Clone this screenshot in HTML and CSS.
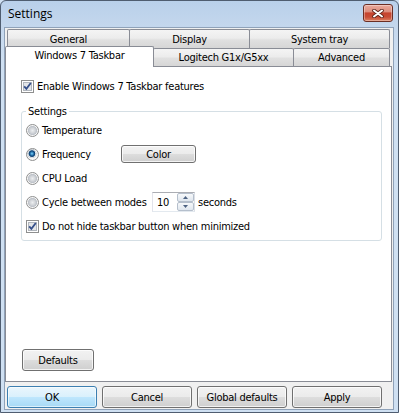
FILE: index.html
```html
<!DOCTYPE html>
<html>
<head>
<meta charset="utf-8">
<link rel="stylesheet" href="styles.css">
</head>
<body>
<div class="window">
  <div class="titlebar">
    <span class="title">Settings</span>
    <div class="close">
      <svg width="12" height="9" viewBox="0 0 12 9">
        <path d="M2 1.5 L10 7.5 M10 1.5 L2 7.5" stroke="#5a2218" stroke-width="3.6" stroke-linecap="round" fill="none"/>
        <path d="M2 1.5 L10 7.5 M10 1.5 L2 7.5" stroke="#ffffff" stroke-width="2" stroke-linecap="round" fill="none"/>
      </svg>
    </div>
  </div>
  <div class="client">
    <div class="tabs">
      <div class="tabrow row1">
        <div class="tab t-general">General</div>
        <div class="tab t-display">Display</div>
        <div class="tab t-tray">System tray</div>
      </div>
      <div class="tabrow row2">
        <div class="tab selected t-win7">Windows 7 Taskbar</div>
        <div class="tab t-logi">Logitech G1x/G5xx</div>
        <div class="tab t-adv">Advanced</div>
      </div>
    </div>
    <div class="panel">
      <div class="check-row enable">
        <span class="checkbox"><svg width="13" height="13" viewBox="0 0 13 13"><rect x="2.5" y="2.5" width="8" height="8" fill="#e3e5e8" stroke="#b1b6bd"/><path d="M3.2 6.3 L5.4 8.9 L9.8 3" stroke="#354f8a" stroke-width="1.8" fill="none"/></svg></span>
        <span class="cb-label">Enable Windows 7 Taskbar features</span>
      </div>
      <fieldset class="group">
        <legend>Settings</legend>
        <div class="opt"><span class="radio"></span><span class="lbl">Temperature</span></div>
        <div class="opt"><span class="radio on"></span><span class="lbl w-freq">Frequency</span><button class="btn color">Color</button></div>
        <div class="opt"><span class="radio"></span><span class="lbl">CPU Load</span></div>
        <div class="opt"><span class="radio"></span><span class="lbl w-cycle">Cycle between modes</span>
          <div class="spin">
            <span class="spin-val">10</span>
            <div class="spin-btns">
              <span class="arrow"><svg width="5" height="3" viewBox="0 0 5 3"><path d="M0 3 L2.5 0 L5 3 Z" fill="#4d6282"/></svg></span>
              <span class="arrow"><svg width="5" height="3" viewBox="0 0 5 3"><path d="M0 0 L2.5 3 L5 0 Z" fill="#4d6282"/></svg></span>
            </div>
          </div>
          <span class="after">seconds</span>
        </div>
        <div class="opt"><span class="checkbox"><svg width="13" height="13" viewBox="0 0 13 13"><rect x="2.5" y="2.5" width="8" height="8" fill="#e3e5e8" stroke="#b1b6bd"/><path d="M3.2 6.3 L5.4 8.9 L9.8 3" stroke="#354f8a" stroke-width="1.8" fill="none"/></svg></span><span class="cb-label">Do not hide taskbar button when minimized</span></div>
      </fieldset>
      <button class="btn defaults">Defaults</button>
    </div>
    <div class="buttons">
      <button class="btn default">OK</button>
      <button class="btn">Cancel</button>
      <button class="btn">Global defaults</button>
      <button class="btn">Apply</button>
    </div>
  </div>
</div>
</body>
</html>
```

FILE: styles.css
```css
* { box-sizing: border-box; }
html, body { margin: 0; padding: 0; }
body {
  width: 399px;
  height: 413px;
  overflow: hidden;
  background: #cfe0f2;
  font: 11px/13px "DejaVu Sans Condensed", "DejaVu Sans", sans-serif;
  font-stretch: condensed;
  letter-spacing: -0.25px;
  color: #000;
}

.window {
  width: 399px;
  height: 413px;
  display: flex;
  flex-direction: column;
  border: 1px solid #4f5d70;
  border-radius: 6px 6px 0 0;
  background: linear-gradient(#b9d0ea 0, #c4d7ed 26px, #cfe0f2 60px, #cfe0f2 100%);
}

.titlebar {
  height: 26px;
  flex: none;
  display: flex;
  align-items: flex-start;
  padding: 0 5px 0 7px;
}
.title {
  font: 12px/16px "Open Sans", sans-serif;
  letter-spacing: 0;
  margin-top: 5px;
  color: #000;
}
.close {
  margin-left: auto;
  margin-top: 3px;
  width: 30px;
  height: 18px;
  border: 1px solid #6b2e24;
  border-radius: 3px;
  background: linear-gradient(#eaaa9c 0%, #dc8d7d 42%, #c6432d 50%, #c84c36 75%, #dd8262 100%);
  box-shadow: inset 0 0 0 1px rgba(255,255,255,0.35);
  display: flex;
  align-items: center;
  justify-content: center;
}

.client {
  flex: 1;
  margin: 0 4px 2px 3px;
  background: #f0f0f0;
  border: 1px solid #8fa2b9;
  display: flex;
  flex-direction: column;
  padding: 1px 0 1px 0;
}

.tabs { flex: none; }
.tabrow { display: flex; }
.row1 { height: 19px; padding-left: 2px; align-items: flex-start; }
.row2 { height: 18px; align-items: flex-end; position: relative; z-index: 1; }

.tab {
  border: 1px solid #898c95;
  border-bottom: 0;
  border-radius: 2px 2px 0 0;
  background: linear-gradient(#f4f4f4 0%, #ececec 45%, #e0e0e0 55%, #d6d6d6 100%);
  display: flex;
  align-items: center;
  justify-content: center;
  flex: none;
  white-space: nowrap;
}
.tab + .tab { margin-left: -1px; }
.row1 .tab { height: 19px; }
.row2 .tab { height: 18px; }
.t-general { width: 123px; }
.t-display { width: 121px; }
.t-tray { width: 141px; }
.t-win7 { width: 149px; }
.t-logi { width: 141px; }
.t-adv { width: 97px; }
.row2 .tab.selected {
  height: 21px;
  margin-bottom: -1px;
  background: #fff;
  padding-bottom: 3px;
  position: relative;
  z-index: 2;
}

.panel {
  flex: 1;
  background: #fff;
  border: 1px solid #898c95;
  margin-right: 1px;
  display: flex;
  flex-direction: column;
  align-items: flex-start;
  padding: 13px 0 10px 15px;
}

.check-row {
  display: flex;
  align-items: center;
  height: 13px;
}
.checkbox {
  width: 13px;
  height: 13px;
  flex: none;
  border: 1px solid #8e8f8f;
  background: #fff;
  display: flex;
  align-items: center;
  justify-content: center;
  overflow: visible;
}
.checkbox svg { display: block; margin: -1px; flex: none; }
.cb-label { margin-left: 3px; white-space: nowrap; }

.group {
  margin: 12px 0 0 0;
  padding: 0 2px 2px 4px;
  width: 361px;
  min-width: 0;
  border: 1px solid #d5dfe5;
  border-radius: 3px;
}
.group legend {
  padding: 0 2px;
  margin: 0;
  line-height: 13px;
}

.opt {
  height: 24px;
  display: flex;
  align-items: center;
  white-space: nowrap;
}
.radio {
  width: 13px;
  height: 13px;
  flex: none;
  border-radius: 50%;
  border: 1px solid #8e8f8f;
  background: radial-gradient(circle at 50% 50%, #eceef0 0, #d3d6da 2.5px, #bcc1c8 4.3px, #f6f6f6 4.8px);
}
.radio.on {
  background: radial-gradient(circle at 45% 42%, #7fd6fb 0, #2a78b4 1.6px, #0e3f6e 2.8px, #5d86ab 3.3px, #e4e7ea 3.7px, #c6cbd1 4.4px, #f6f6f6 4.8px);
}
.lbl { margin-left: 3px; flex: none; }
.w-freq { width: 79px; }
.w-cycle { width: 110px; }

.btn {
  font: inherit;
  letter-spacing: inherit;
  color: #000;
  border: 1px solid #707070;
  border-radius: 3px;
  background: linear-gradient(#f2f2f2 0%, #ebebeb 50%, #dddddd 51%, #cfcfcf 100%);
  box-shadow: inset 0 0 0 1px rgba(255,255,255,0.75);
  padding: 0;
  display: flex;
  align-items: center;
  justify-content: center;
  white-space: nowrap;
}
.btn.color { width: 75px; height: 18px; }
.btn.defaults { width: 72px; height: 22px; margin-top: auto; margin-left: 1px; }
.btn.default {
  border-color: #3c7fb1;
  background: linear-gradient(#eaf6fd 0%, #d9f0fc 50%, #bee6fd 51%, #a7d9f5 100%);
  box-shadow: inset 0 0 0 1px rgba(255,255,255,0.6);
}

.spin {
  display: flex;
  width: 43px;
  height: 20px;
  border: 1px solid;
  border-color: #abadb3 #dbdfe6 #e3e9ef #e2e3ea;
  background: #fff;
  flex: none;
}
.spin-val {
  flex: 1;
  padding-left: 4px;
  display: flex;
  align-items: center;
}
.spin-btns {
  width: 17px;
  display: flex;
  flex-direction: column;
}
.arrow {
  height: 9px;
  border: 1px solid #b5bfcc;
  border-radius: 2px;
  background: linear-gradient(#f7f9fb, #dfe6ee);
  display: flex;
  align-items: center;
  justify-content: center;
}
.arrow svg { display: block; }
.after { margin-left: 3px; }

.buttons {
  flex: none;
  display: flex;
  gap: 5px;
  margin-top: 4px;
  padding-left: 2px;
}
.buttons .btn { width: 90px; height: 22px; }
```
